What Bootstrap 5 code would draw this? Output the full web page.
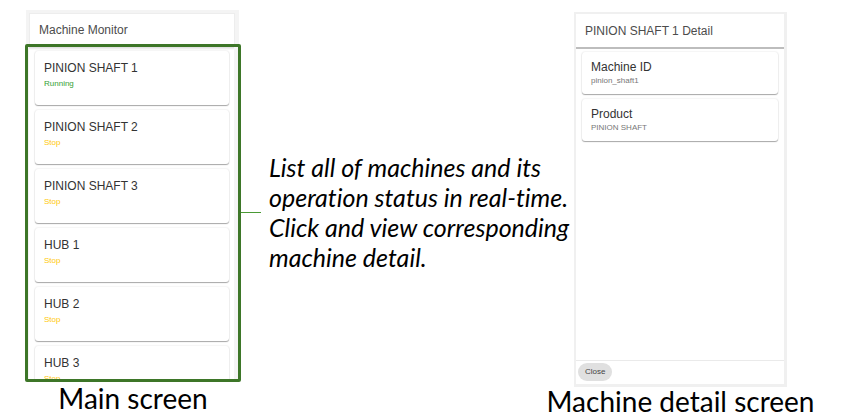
<!DOCTYPE html>
<html lang="en">
<head>
<meta charset="utf-8">
<meta name="viewport" content="width=device-width, initial-scale=1">
<title>Machine Monitor</title>
<link href="https://cdn.jsdelivr.net/npm/bootstrap@5.3.0/dist/css/bootstrap.min.css" rel="stylesheet">
<style>
body { background: #fff; color: #000; font-family: "Liberation Sans", Arial, sans-serif; overflow-x: hidden; }
.board { display: grid; grid-template-columns: minmax(0, 216fr) minmax(0, 333fr) minmax(0, 213fr); padding: 10px 55px 0 25px; }
.phone { background: #f4f4f4; margin: 0 2px 0 1px; padding: 3px 4px 0 3px; }
.screen-title { font-size: 12px; line-height: 16px; color: #4c4c4c; margin: 0; padding: 8px 9px; font-weight: 400; background: #fff; border: 1px solid #ededed; border-bottom: 0; }
.phone .screen-title { padding-bottom: 6px; }
.highlight { height: 338px; border: 3px solid #3d7628; border-radius: 2px; background: #f4f4f4; padding: 0 4px 0 1px; overflow: hidden; }
.machines { background: linear-gradient(#ddd, #fff 3px); padding: 4px 5px 0 6px; gap: 5px; }
.tile { border: 0; border-radius: 3px; background: #fff; box-shadow: 0 1px 1px rgba(0,0,0,.32), 0 0 2px rgba(0,0,0,.14); padding: 8px 9px; color: #333; text-decoration: none; flex: none; }
.machine { height: 54px; padding-top: 9px; }
.tile-name { font-size: 12px; line-height: 17px; }
.tile-note { font-size: 8px; line-height: 14px; }
.running { color: #35a035; }
.stopped { color: #ffc80a; }
.caption { font-family: Lato, "Open Sans", sans-serif; font-size: 28px; line-height: 32px; white-space: nowrap; }
#detail .caption { line-height: 28px; }
.connector { width: 20px; height: 1px; background: #4a9a35; flex: none; margin-top: 202px; }
.note { font-family: Lato, "Open Sans", sans-serif; font-style: italic; font-size: 25px; line-height: 30px; font-variant-ligatures: none; white-space: nowrap; margin: 142px 0 0 8px; }
.detail { margin-top: 2px; height: 375px; background: #fff; border: solid #f0f0f0; border-width: 2px 3px 3px 2px; }
.detail .screen-title { border: 0; border-bottom: 2px solid #bdbdbd; padding: 9px 9px 8px; }
.fields { padding: 3px 6px 0; gap: 5px; }
.field { padding: 7px 9px; height: 42px; }
.field .tile-note { line-height: 9px; color: #777; }
.foot { border-top: 1px solid #eaeaea; padding: 2px 2px 3px; }
.close-btn { background: #e0e0e0; color: #444; border: 0; border-radius: 10px; font-size: 8px; line-height: 18px; padding: 0 7px; }
</style>
<script src="https://cdn.jsdelivr.net/npm/bootstrap@5.3.0/dist/js/bootstrap.bundle.min.js"></script>
</head>
<body>
<main class="board">
  <section>
    <div class="phone"><h1 class="screen-title">Machine Monitor</h1></div>
    <div class="highlight">
      <div class="machines d-flex flex-column">
        <a href="#detail" class="card tile machine"><span class="tile-name">PINION SHAFT 1</span><span class="tile-note running">Running</span></a>
        <a href="#detail" class="card tile machine"><span class="tile-name">PINION SHAFT 2</span><span class="tile-note stopped">Stop</span></a>
        <a href="#detail" class="card tile machine"><span class="tile-name">PINION SHAFT 3</span><span class="tile-note stopped">Stop</span></a>
        <a href="#detail" class="card tile machine"><span class="tile-name">HUB 1</span><span class="tile-note stopped">Stop</span></a>
        <a href="#detail" class="card tile machine"><span class="tile-name">HUB 2</span><span class="tile-note stopped">Stop</span></a>
        <a href="#detail" class="card tile machine"><span class="tile-name">HUB 3</span><span class="tile-note stopped">Stop</span></a>
      </div>
    </div>
    <div class="caption d-flex justify-content-center">Main screen</div>
  </section>
  <div class="d-flex align-items-start">
    <div class="connector"></div>
    <p class="note">List all of machines and its<br>operation status in real-time.<br>Click and view corresponding<br>machine detail.</p>
  </div>
  <section id="detail">
    <div class="detail d-flex flex-column">
      <h2 class="screen-title">PINION SHAFT 1 Detail</h2>
      <div class="fields d-flex flex-column flex-grow-1">
        <div class="card tile field"><span class="tile-name">Machine ID</span><span class="tile-note">pinion_shaft1</span></div>
        <div class="card tile field"><span class="tile-name">Product</span><span class="tile-note">PINION SHAFT</span></div>
      </div>
      <div class="foot d-flex"><button type="button" class="close-btn">Close</button></div>
    </div>
    <div class="caption d-flex justify-content-center">Machine detail screen</div>
  </section>
</main>
</body>
</html>
